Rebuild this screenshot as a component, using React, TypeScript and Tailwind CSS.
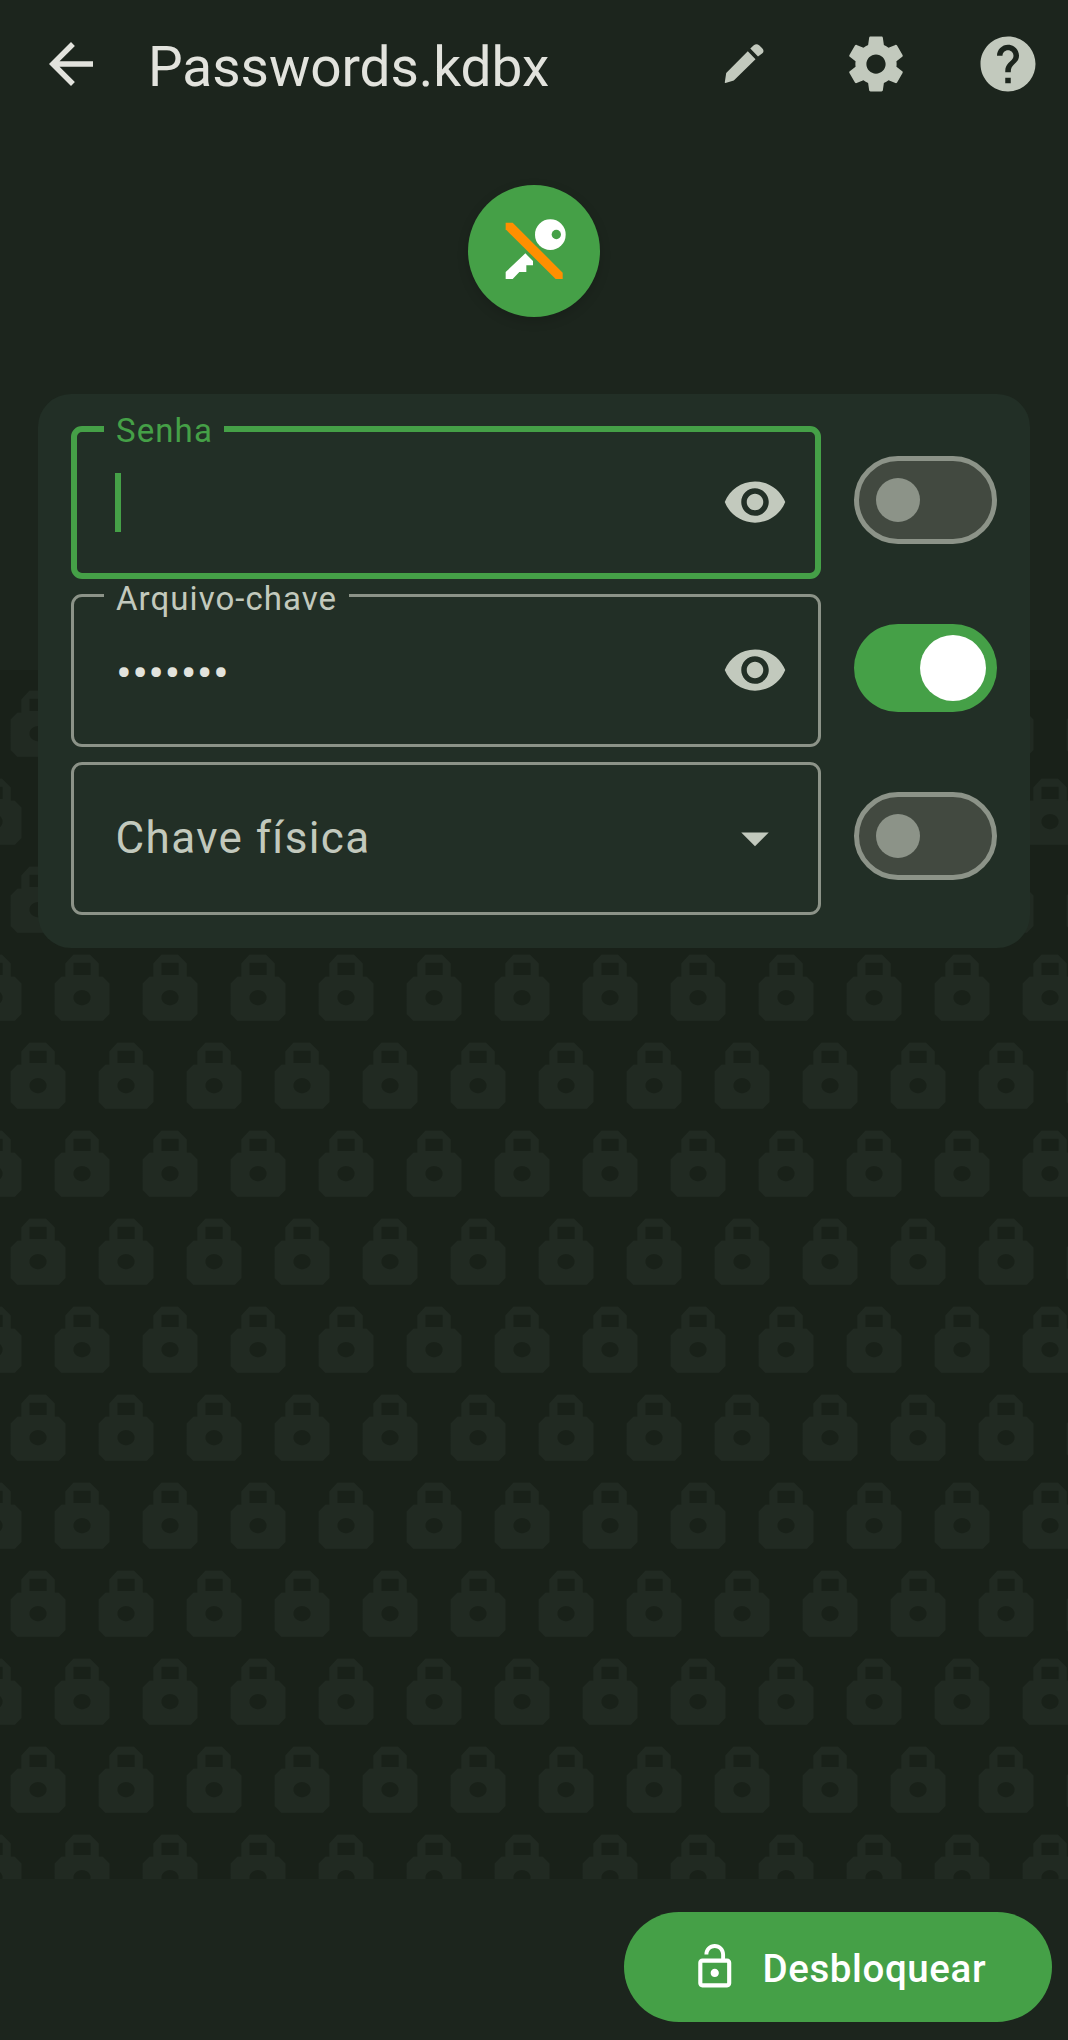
import type { ReactNode } from "react";

function Icon({ children, className }: { children: ReactNode; className?: string }) {
  return (
    <svg viewBox="0 0 24 24" fill="currentColor" className={className ?? "size-[66px]"}>
      {children}
    </svg>
  );
}

function LockPattern() {
  const lock =
    "M0 28.7 6.7 22H10.7V8.7L18.7 0H35.3L44 8.7V22H48L54.7 28.7V59.3L48 66H6.7L0 59.3ZM18.7 8V20.3H36V8ZM27.3 35.3a8.7 7.7 0 1 0 .01 0Z";
  return (
    <svg className="absolute inset-x-0 top-[670px] h-[1209px] w-full bg-[#192119]" aria-hidden="true">
      <defs>
        <pattern id="locks" width="88" height="176" patternUnits="userSpaceOnUse">
          <g fill="#212a22" fillRule="evenodd">
            <path d={lock} transform="translate(10.7 20.7)" />
            <path d={lock} transform="translate(54.7 108.7)" />
            <path d={lock} transform="translate(-33.3 108.7)" />
          </g>
        </pattern>
      </defs>
      <rect width="100%" height="100%" fill="url(#locks)" />
    </svg>
  );
}

function Toggle({ on }: { on?: boolean }) {
  return on ? (
    <button role="switch" aria-checked="true" className="mt-[30px] flex h-[88px] w-[143px] items-center justify-end rounded-full bg-[#45a047] pr-[11px]">
      <span className="size-[66px] rounded-full bg-white" />
    </button>
  ) : (
    <button role="switch" aria-checked="false" className="mt-[30px] flex h-[88px] w-[143px] items-center rounded-full border-[5.5px] border-[#8c9388] bg-[#424940] pl-[17px]">
      <span className="size-[44px] rounded-full bg-[#8c9388]" />
    </button>
  );
}

function Eye() {
  return (
    <Icon>
      <path d="M12 4.5C7 4.5 2.73 7.61 1 12c1.73 4.39 6 7.5 11 7.5s9.27-3.11 11-7.5c-1.73-4.39-6-7.5-11-7.5zM12 17c-2.76 0-5-2.24-5-5s2.24-5 5-5 5 2.24 5 5-2.24 5-5 5zm0-8c-1.66 0-3 1.34-3 3s1.34 3 3 3 3-1.34 3-3-1.34-3-3-3z" />
    </Icon>
  );
}

function Field({ label, labelStyle, box, on, icon, children }: { label?: string; labelStyle?: string; box: string; on?: boolean; icon: ReactNode; children: ReactNode }) {
  return (
    <div className="flex justify-between">
      <div className={`relative flex h-[153px] w-[750px] items-center justify-between rounded-[11px] ${box}`}>
        {label && (
          <span className={`absolute flex h-[30px] items-center bg-[#222f26] pl-[12px] text-[33px] whitespace-nowrap ${labelStyle}`}>{label}</span>
        )}
        {children}
        <span className="mb-[2px] text-[#c2c9bd]">{icon}</span>
      </div>
      <Toggle on={on} />
    </div>
  );
}

export default function App() {
  return (
    <div className="relative flex h-[2040px] w-[1068px] flex-col overflow-hidden bg-[#1c251d] font-[Roboto,sans-serif]">
      <LockPattern />
      <header className="relative flex h-[128px] items-center pl-[38px] text-[#c2c9bd]">
        <Icon className="size-[66px] text-[#e2e3dd]">
          <path d="M20 11H7.83l5.59-5.59L12 4l-8 8 8 8 1.41-1.41L7.83 13H20v-2z" />
        </Icon>
        <h1 className="mt-[5px] ml-[44px] text-[55px] leading-[64px] tracking-[-0.05px] text-[#e2e3dd]">Passwords.kdbx</h1>
        <div className="mr-[27px] ml-auto flex items-center gap-[66px]">
          <svg viewBox="0 -1 66 66" className="size-[66px]" fill="currentColor">
            <path d="M13.8 50.2 15.2 41 36.8 19.3 44.5 27.3 22.8 48.6 14.5 51Q13.4 51 13.8 50.2ZM39.3 16.6 42.8 13.2Q45.5 11 48.4 13.400L51 16Q53.800 18.800 51.400 21.300L47 24.500Z" />
          </svg>
          <Icon>
            <path d="M19.43 12.98c.04-.32.07-.64.07-.98s-.03-.66-.07-.98l2.11-1.65c.19-.15.24-.42.12-.64l-2-3.46c-.12-.22-.39-.3-.61-.22l-2.49 1c-.52-.4-1.08-.73-1.69-.98l-.38-2.65C14.46 2.18 14.25 2 14 2h-4c-.25 0-.46.18-.49.42l-.38 2.65c-.61.25-1.17.59-1.69.98l-2.49-1c-.23-.09-.49 0-.61.22l-2 3.46c-.13.22-.07.49.12.64l2.11 1.65c-.04.32-.07.65-.07.98s.03.66.07.98l-2.11 1.65c-.19.15-.24.42-.12.64l2 3.46c.12.22.39.3.61.22l2.49-1c.52.4 1.08.73 1.69.98l.38 2.65c.03.24.24.42.49.42h4c.25 0 .46-.18.49-.42l.38-2.65c.61-.25 1.17-.59 1.69-.98l2.49 1c.23.09.49 0 .61-.22l2-3.46c.12-.22.07-.49-.12-.64l-2.11-1.65zM12 15.5c-1.93 0-3.5-1.57-3.5-3.5s1.57-3.5 3.5-3.5 3.5 1.57 3.5 3.5-1.57 3.5-3.5 3.5z" />
          </Icon>
          <Icon>
            <path d="M12 2C6.48 2 2 6.48 2 12s4.48 10 10 10 10-4.48 10-10S17.52 2 12 2zm1 17h-2v-2h2v2zm2.07-7.75l-.9.92C13.45 12.9 13 13.5 13 15h-2v-.5c0-1.1.45-2.1 1.17-2.83l1.24-1.26c.37-.36.59-.86.59-1.41 0-1.1-.9-2-2-2s-2 .9-2 2H8c0-2.21 1.79-4 4-4s4 1.79 4 4c0 .88-.36 1.68-.93 2.25z" />
          </Icon>
        </div>
      </header>

      <div className="relative mx-auto mt-[57px] size-[132px] rounded-full bg-[#45a047] shadow-[0_4px_12px_rgba(0,0,0,0.15)]">
        <svg viewBox="84 75 396 396" className="size-full">
          <path d="M256 280 279 303V316H259V336H238L218 357H197V336Z" fill="#fff" />
          <path d="M197 188H218L368 338V357H347L197 208Z" fill="#ff8f00" />
          <circle cx="331" cy="224" r="46" fill="#fff" />
          <circle cx="349" cy="223.5" r="14" fill="#45a047" />
        </svg>
      </div>

      <main className="relative mt-[77px] ml-[38px] flex h-[554px] w-[992px] flex-col gap-[15px] rounded-[33px] bg-[#222f26] pt-[32px] pr-[33px] pl-[33px]">
        <Field label="Senha" labelStyle="-top-[16px] left-[27px] w-[120px] tracking-[1.1px] text-[#45a047]" box="border-[6px] border-[#45a047] pr-[27px] pl-[38px]" icon={<Eye />}>
          <span className="h-[59px] w-[6px] bg-[#45a047]" />
        </Field>
        <Field label="Arquivo-chave" labelStyle="-top-[13px] left-[30px] w-[245px] tracking-[1.05px] text-[#c2c9bd]" box="border-[3px] border-[#8c9388] pr-[30px] pl-[41px]" on icon={<Eye />}>
          <span className="mt-[5px] ml-px text-[47px] tracking-[0.3px] text-[#e2e3dd]">•••••••</span>
        </Field>
        <Field
          box="border-[3px] border-[#8c9388] pr-[30px] pl-[41px]"
          icon={
            <Icon>
              <path d="M7 10l5 5 5-5z" />
            </Icon>
          }
        >
          <span className="mb-[2px] ml-[0.5px] text-[44px] tracking-[1.4px] text-[#c2c9bd]">Chave física</span>
        </Field>
      </main>

      <footer className="relative mt-auto flex h-[161px] justify-end bg-[#1c251d] pt-[33px] pr-[16px]">
        <button className="flex h-[110px] w-[428px] items-center rounded-full bg-[#45a047] pl-[66px] text-[38.5px] font-medium text-white">
          <Icon className="size-[49.5px]">
            <path d="M12 17c1.1 0 2-.9 2-2s-.9-2-2-2-2 .9-2 2 .9 2 2 2zm6-9h-1V6c0-2.76-2.24-5-5-5S7 3.24 7 6h1.9c0-1.71 1.39-3.1 3.1-3.1 1.71 0 3.1 1.39 3.1 3.1v2H6c-1.1 0-2 .9-2 2v10c0 1.1.9 2 2 2h12c1.1 0 2-.9 2-2V10c0-1.1-.9-2-2-2zm0 12H6V10h12v10z" />
          </Icon>
          <span className="mt-[3px] ml-[23px] tracking-[0.6px]">Desbloquear</span>
        </button>
      </footer>
    </div>
  );
}
